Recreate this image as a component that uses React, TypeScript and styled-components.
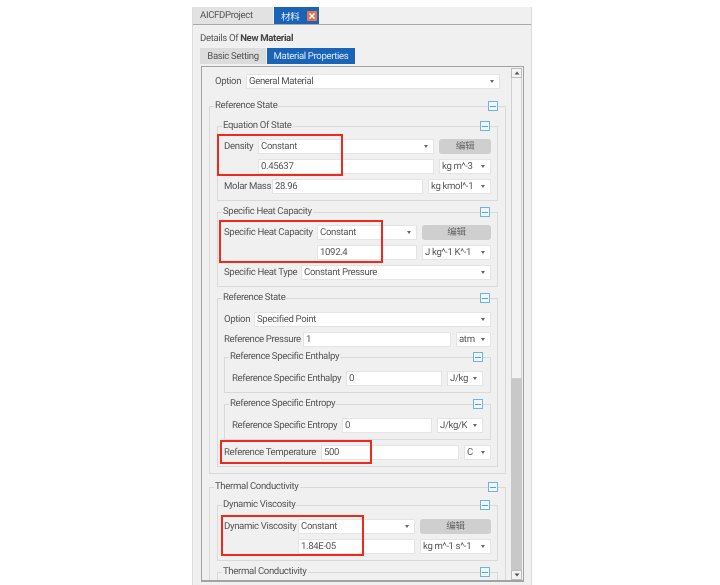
import styled, { createGlobalStyle } from "styled-components";
import type { ReactNode } from "react";

const GlobalStyle = createGlobalStyle`
  html, body {
    margin: 0;
    padding: 0;
    background: #fff;
  }
  body {
    font-family: Roboto, "Noto Sans CJK SC", sans-serif;
    font-size: 9.6px;
    letter-spacing: -0.35px;
    color: #555;
    text-rendering: geometricPrecision;
  }
`;

const Page = styled.div`
  width: 720px;
  height: 585px;
  padding: 7px 188px 0 192px;
  box-sizing: border-box;
  overflow: hidden;
`;

const Panel = styled.div`
  height: 578px;
  display: flex;
  flex-direction: column;
  background: #f0f0f0;
  border-left: 1px solid #dcdcdc;
  border-right: 1px solid #dcdcdc;
  filter: blur(0.35px);
`;

const TabBar = styled.div`
  display: flex;
  height: 17px;
  flex: none;
  gap: 1px;
  border-bottom: 1px solid #a9a9a9;
`;

const ProjectTab = styled.div`
  width: 80px;
  background: #e2e2e2;
  padding-left: 7px;
  box-sizing: border-box;
  line-height: 17px;
`;

const ActiveTab = styled.div`
  width: 45px;
  background: #1a64b8;
  color: #e6eef8;
  display: flex;
  align-items: center;
  padding-left: 7px;
  gap: 7px;
  box-sizing: border-box;
`;

const CloseBox = styled.span`
  width: 10px;
  height: 10px;
  background: #e8704a;
  display: flex;
  align-items: center;
  justify-content: center;
`;

const Heading = styled.div`
  margin: 7px 0 0 7px;
  height: 15px;
  line-height: 14px;
  b {
    font-weight: 700;
    color: #444;
  }
`;

const SubTabs = styled.div`
  display: flex;
  margin: 1px 0 0 7px;
  height: 16px;
  flex: none;
`;

const SubTab = styled.div<{ $active?: boolean; $width: number }>`
  width: ${(p) => p.$width}px;
  text-align: center;
  line-height: 17px;
  margin-right: 1px;
  background: ${(p) => (p.$active ? "#1a64b8" : "#dcdcdc")};
  color: ${(p) => (p.$active ? "#dce8f6" : "#555")};
`;

const ContentBox = styled.div`
  flex: 1;
  min-height: 0;
  margin: 2px 7px 3px 8px;
  border: 1px solid #a2a2a2;
  border-width: 1px 1px 2px 1px;
  display: flex;
  overflow: hidden;
`;

const ScrollArea = styled.div`
  flex: 1;
  min-width: 0;
  padding: 7px 5px 0 7px;
  overflow: hidden;
`;

const Scrollbar = styled.div`
  width: 11px;
  flex: none;
  display: flex;
  flex-direction: column;
  margin: 1px 1px 0 0;
`;

const ScrollButton = styled.div`
  height: 10px;
  flex: none;
  background: #f4f4f4;
  border: 1px solid #bdbdbd;
  box-sizing: border-box;
  display: flex;
  align-items: center;
  justify-content: center;
`;

const ScrollThumb = styled.div`
  height: 301px;
  flex: none;
  background: #f3f3f3;
  border: 1px solid #d0d0d0;
  border-top: none;
  box-sizing: border-box;
`;

const ScrollTrack = styled.div`
  flex: 1;
  background: #c8c8c8;
`;

const OptionRow = styled.div`
  display: flex;
  height: 15px;
  gap: 5px;
  margin: 0 6px 0 6px;
`;

const Group = styled.section<{ $pad: number; $top: number; $gap: number; $bottom: number }>`
  position: relative;
  border: 1px solid #d9d9d9;
  margin-top: ${(p) => p.$gap}px;
  padding: ${(p) => p.$top}px ${(p) => p.$pad}px ${(p) => p.$bottom}px;
  display: flex;
  flex-direction: column;
  gap: 5px;
`;

const GroupTitle = styled.span`
  position: absolute;
  top: -8px;
  left: 4px;
  padding: 0 1px;
  line-height: 13px;
  background: #f0f0f0;
`;

const Collapse = styled.span`
  position: absolute;
  top: -6px;
  right: 7px;
  width: 10px;
  height: 10px;
  box-sizing: border-box;
  border: 1px solid #6fb3e0;
  background: #f0f6fb;
  display: flex;
  align-items: center;
  justify-content: center;
  &::before {
    content: "";
    width: 6px;
    height: 1px;
    background: #5aa5d8;
  }
`;

const Row = styled.div`
  display: flex;
  height: 15px;
  gap: 5px;
  align-items: stretch;
`;

const Label = styled.span<{ $width: number }>`
  width: ${(p) => p.$width}px;
  flex: none;
  line-height: 15px;
  white-space: nowrap;
`;

const Field = styled.div<{ $width?: number }>`
  ${(p) => (p.$width ? `width: ${p.$width}px; flex: none;` : "flex: 1; min-width: 0;")}
  position: relative;
  background: #fff;
  border: 1px solid #e4e4e4;
  box-sizing: border-box;
  padding-left: 2px;
  line-height: 13px;
  white-space: nowrap;
  overflow: hidden;
`;

const Arrow = styled.span`
  position: absolute;
  right: 5px;
  top: 5px;
  border-left: 2px solid transparent;
  border-right: 2px solid transparent;
  border-top: 3px solid #666;
`;

const EditButton = styled.div<{ $width: number }>`
  width: ${(p) => p.$width}px;
  flex: none;
  background: #cfcfcf;
  border-radius: 3px;
  text-align: center;
  line-height: 15px;
  color: #666;
`;

const Marked = styled.div`
  position: relative;
  display: flex;
  flex-direction: column;
  gap: 5px;
`;

const RedBox = styled.div<{ $x: number; $y: number; $w: number; $h: number }>`
  position: absolute;
  z-index: 2;
  left: ${(p) => p.$x}px;
  top: ${(p) => p.$y}px;
  width: ${(p) => p.$w}px;
  height: ${(p) => p.$h}px;
  box-sizing: border-box;
  border: 2px solid #ee2a1c;
  pointer-events: none;
`;

function Box(props: { title: string; pad?: number; top?: number; gap?: number; bottom?: number; children: ReactNode }) {
  return (
    <Group $pad={props.pad ?? 6} $top={props.top ?? 12} $gap={props.gap ?? 0} $bottom={props.bottom ?? 6}>
      <GroupTitle>{props.title}</GroupTitle>
      <Collapse />
      {props.children}
    </Group>
  );
}

function Select(props: { text: string; width?: number }) {
  return (
    <Field $width={props.width}>
      {props.text}
      <Arrow />
    </Field>
  );
}

function MethodRows(props: { label: string; labelWidth: number; value: string; unit: string; buttonWidth: number; unitWidth: number }) {
  return (
    <>
      <Row>
        <Label $width={props.labelWidth}>{props.label}</Label>
        <Select text="Constant" />
        <EditButton $width={props.buttonWidth}>编辑</EditButton>
      </Row>
      <Row>
        <Label $width={props.labelWidth} />
        <Field>{props.value}</Field>
        <Select text={props.unit} width={props.unitWidth} />
      </Row>
    </>
  );
}

export default function App() {
  return (
    <Page>
      <GlobalStyle />
      <Panel>
        <TabBar>
          <ProjectTab>AICFDProject</ProjectTab>
          <ActiveTab>
            材料
            <CloseBox>
              <svg width="8" height="8" viewBox="0 0 8 8">
                <path d="M1.5 1.5l5 5M6.5 1.5l-5 5" stroke="#fff" strokeWidth="1.6" />
              </svg>
            </CloseBox>
          </ActiveTab>
        </TabBar>
        <Heading>
          Details Of <b>New Material</b>
        </Heading>
        <SubTabs>
          <SubTab $width={66}>Basic Setting</SubTab>
          <SubTab $active $width={88}>Material Properties</SubTab>
        </SubTabs>
        <ContentBox>
          <ScrollArea>
            <OptionRow>
              <Label $width={26}>Option</Label>
              <Select text="General Material" />
            </OptionRow>
            <Box title="Reference State" gap={17} top={19} pad={7} bottom={6}>
              <Box title="Equation Of State">
                <Marked>
                  <RedBox $x={-7} $y={-5} $w={126} $h={42} />
                  <MethodRows label="Density" labelWidth={29} value="0.45637" unit="kg m^-3" buttonWidth={52} unitWidth={52} />
                </Marked>
                <Row>
                  <Label $width={43}>Molar Mass</Label>
                  <Field>28.96</Field>
                  <Select text="kg kmol^-1" width={63} />
                </Row>
              </Box>
              <Box title="Specific Heat Capacity" gap={6}>
                <Marked>
                  <RedBox $x={-5} $y={-5} $w={164} $h={43} />
                  <MethodRows label="Specific Heat Capacity" labelWidth={88} value="1092.4" unit="J kg^-1 K^-1" buttonWidth={69} unitWidth={69} />
                </Marked>
                <Row>
                  <Label $width={72}>Specific Heat Type</Label>
                  <Select text="Constant Pressure" />
                </Row>
              </Box>
              <Box title="Reference State" gap={6} top={13}>
                <Row>
                  <Label $width={25}>Option</Label>
                  <Select text="Specified Point" />
                </Row>
                <Row>
                  <Label $width={74}>Reference Pressure</Label>
                  <Field>1</Field>
                  <Select text="atm" width={35} />
                </Row>
                <Box title="Reference Specific Enthalpy" gap={5} top={13} pad={7} bottom={6}>
                  <Row>
                    <Label $width={109}>Reference Specific Enthalpy</Label>
                    <Field>0</Field>
                    <Select text="J/kg" width={36} />
                  </Row>
                </Box>
                <Box title="Reference Specific Entropy" gap={6} top={13} pad={7} bottom={6}>
                  <Row>
                    <Label $width={105}>Reference Specific Entropy</Label>
                    <Field>0</Field>
                    <Select text="J/kg/K" width={46} />
                  </Row>
                </Box>
                <Marked>
                  <RedBox $x={-4} $y={-5} $w={152} $h={24} />
                  <Row>
                    <Label $width={92}>Reference Temperature</Label>
                    <Field>500</Field>
                    <Select text="C" width={27} />
                  </Row>
                </Marked>
              </Box>
            </Box>
            <Box title="Thermal Conductivity" gap={13} top={17} pad={7} bottom={11}>
              <Box title="Dynamic Viscosity" top={13}>
                <Marked>
                  <RedBox $x={-3} $y={-4} $w={143} $h={41} />
                  <MethodRows label="Dynamic Viscosity" labelWidth={69} value="1.84E-05" unit="kg m^-1 s^-1" buttonWidth={71} unitWidth={71} />
                </Marked>
              </Box>
              <Box title="Thermal Conductivity" gap={6}>
                <Row>
                  <Label $width={60} />
                </Row>
              </Box>
            </Box>
          </ScrollArea>
          <Scrollbar>
            <ScrollButton>
              <svg width="6" height="4" viewBox="0 0 6 4">
                <path d="M3 0.5L5.5 3.5H0.5Z" fill="#555" />
              </svg>
            </ScrollButton>
            <ScrollThumb />
            <ScrollTrack />
            <ScrollButton>
              <svg width="6" height="4" viewBox="0 0 6 4">
                <path d="M3 3.5L5.5 0.5H0.5Z" fill="#555" />
              </svg>
            </ScrollButton>
          </Scrollbar>
        </ContentBox>
      </Panel>
    </Page>
  );
}
